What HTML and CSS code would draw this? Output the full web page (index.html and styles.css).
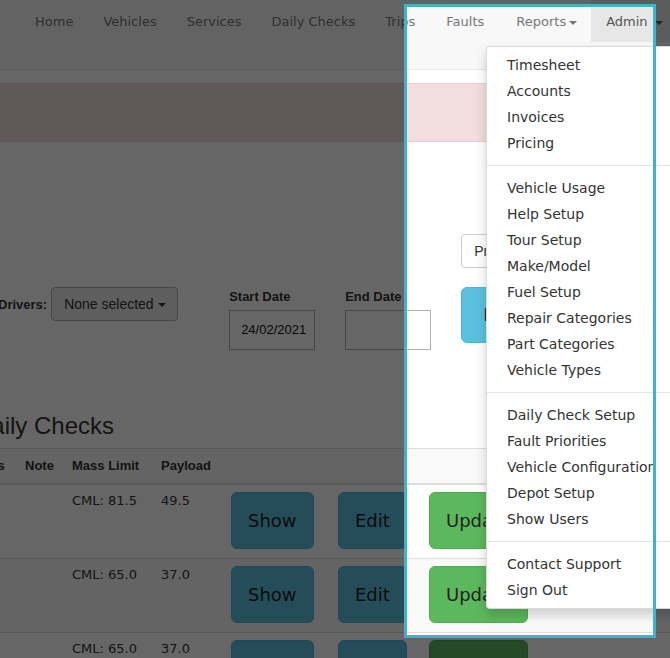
FILE: index.html
```html
<!DOCTYPE html>
<html>
<head>
<meta charset="utf-8">
<title>Daily Checks</title>
<link rel="stylesheet" href="styles.css">
</head>
<body>
<div class="page">
  <nav class="navbar">
    <ul class="nav">
      <li><a>Home</a></li>
      <li><a>Vehicles</a></li>
      <li><a>Services</a></li>
      <li><a>Daily Checks</a></li>
      <li><a>Trips</a></li>
      <li class="wide"><a>Faults</a></li>
      <li class="wide reports"><a>Reports<span class="caret"></span></a></li>
      <li class="active"><a>Admin <span class="caret"></span></a></li>
    </ul>
  </nav>

  <div class="alert"></div>

  <div class="filters">
    <div class="drv">
      <label class="lbl">Drivers:</label>
      <div class="btn-dd">None selected <span class="caret tight"></span></div>
    </div>
    <div class="date start">
      <label class="lbl">Start Date</label>
      <div class="input">24/02/2021</div>
    </div>
    <div class="date end">
      <label class="lbl">End Date</label>
      <div class="input"></div>
    </div>
    <div class="side">
      <div class="select">Preset ranges</div>
      <div class="big-btn">Filter</div>
    </div>
  </div>

  <h2 class="title">Daily Checks</h2>

  <table class="table">
    <colgroup>
      <col class="c-status">
      <col class="c-note">
      <col class="c-mass">
      <col class="c-pay">
      <col class="c-show">
      <col class="c-edit">
      <col class="c-upd">
    </colgroup>
    <thead>
      <tr>
        <th>Status</th>
        <th>Note</th>
        <th>Mass Limit</th>
        <th>Payload</th>
        <th></th>
        <th></th>
        <th></th>
      </tr>
    </thead>
    <tbody>
      <tr>
        <td></td><td></td><td>CML: 81.5</td><td>49.5</td>
        <td><span class="btn info">Show</span></td>
        <td><span class="btn info">Edit</span></td>
        <td><span class="btn success">Update</span></td>
      </tr>
      <tr>
        <td></td><td></td><td>CML: 65.0</td><td>37.0</td>
        <td><span class="btn info">Show</span></td>
        <td><span class="btn info">Edit</span></td>
        <td><span class="btn success">Update</span></td>
      </tr>
      <tr>
        <td></td><td></td><td>CML: 65.0</td><td>37.0</td>
        <td><span class="btn info">Show</span></td>
        <td><span class="btn info">Edit</span></td>
        <td><span class="btn success">Update</span></td>
      </tr>
    </tbody>
  </table>
</div>

<div class="tour-shade"></div>

<ul class="dropdown">
  <li><a>Timesheet</a></li>
  <li><a>Accounts</a></li>
  <li><a>Invoices</a></li>
  <li><a>Pricing</a></li>
  <li class="divider"></li>
  <li><a>Vehicle Usage</a></li>
  <li><a>Help Setup</a></li>
  <li><a>Tour Setup</a></li>
  <li><a>Make/Model</a></li>
  <li><a>Fuel Setup</a></li>
  <li><a>Repair Categories</a></li>
  <li><a>Part Categories</a></li>
  <li><a>Vehicle Types</a></li>
  <li class="divider"></li>
  <li><a>Daily Check Setup</a></li>
  <li><a>Fault Priorities</a></li>
  <li><a>Vehicle Configuration</a></li>
  <li><a>Depot Setup</a></li>
  <li><a>Show Users</a></li>
  <li class="divider"></li>
  <li><a>Contact Support</a></li>
  <li><a>Sign Out</a></li>
</ul>

<div class="tour-frame"></div>
</body>
</html>
```

FILE: styles.css
```css
html, body {
  margin: 0;
  padding: 0;
  width: 670px;
  height: 658px;
  overflow: hidden;
  background: #fff;
}

body {
  position: relative;
  font-family: "Liberation Sans", Arial, sans-serif;
  color: #333;
  font-size: 14px;
}

.page {
  width: 670px;
}

/* navbar */
.navbar {
  height: 69px;
  background: #f8f8f8;
  border-bottom: 1px solid #e7e7e7;
}

.nav {
  list-style: none;
  margin: 0;
  padding: 0 0 0 20px;
  display: flex;
  white-space: nowrap;
}

.nav a {
  display: block;
  padding: 12px 15px 10px;
  line-height: 20px;
  font-family: "DejaVu Sans", Verdana, sans-serif;
  font-size: 13px;
  color: #777;
}

.nav .wide a {
  padding-left: 16px;
  padding-right: 16px;
}

.nav .reports a {
  padding-right: 14px;
}

.nav .active a {
  background: #e7e7e7;
  color: #555;
}

.caret {
  display: inline-block;
  width: 0;
  height: 0;
  margin-left: 3px;
  vertical-align: middle;
  border-top: 4px solid;
  border-left: 4px solid transparent;
  border-right: 4px solid transparent;
}

.caret.tight {
  margin-left: 0;
}

/* alert */
.alert {
  margin: 13px -20px 0;
  height: 57px;
  background: #f2dede;
  border: 1px solid #ebccd1;
}

/* filters */
.filters {
  display: flex;
  align-items: flex-start;
}

.lbl {
  font-weight: bold;
  font-size: 13px;
  line-height: 15px;
  color: #333;
}

.drv {
  display: flex;
  align-items: center;
  gap: 4px;
  margin-left: -2px;
  margin-top: 145px;
}

.btn-dd {
  box-sizing: border-box;
  width: 127px;
  height: 34px;
  padding: 6px 12px;
  line-height: 20px;
  font-size: 14px;
  color: #333;
  background: #ebebeb;
  border: 1px solid #b3b3b3;
  border-radius: 4px;
  white-space: nowrap;
  overflow: hidden;
}

.date {
  display: flex;
  flex-direction: column;
  margin-top: 147px;
}

.date .lbl {
  margin-bottom: 6px;
}

.date.start {
  margin-left: 51px;
}

.date.end {
  margin-left: 30px;
}

.input {
  box-sizing: border-box;
  width: 86px;
  height: 40px;
  padding: 0 11px;
  border: 1px solid #b0b0b0;
  font-size: 13px;
  line-height: 38px;
  color: #111;
  white-space: nowrap;
}

.side {
  display: flex;
  flex-direction: column;
  gap: 19px;
  margin-left: 30px;
  margin-top: 92px;
}

.select {
  box-sizing: border-box;
  width: 160px;
  height: 34px;
  padding: 6px 12px;
  line-height: 20px;
  font-size: 14px;
  color: #333;
  border: 1px solid #ccc;
  border-radius: 4px;
  white-space: nowrap;
}

.big-btn {
  box-sizing: border-box;
  width: 140px;
  height: 56px;
  padding: 0 21px;
  line-height: 54px;
  font-family: "DejaVu Sans", Verdana, sans-serif;
  font-size: 18px;
  color: #222;
  background: #5bc0de;
  border: 1px solid #46b8da;
  border-radius: 6px;
}

/* heading */
.title {
  margin: 63px 0 9px -26px;
  font-size: 24px;
  line-height: 26px;
  font-weight: normal;
  color: #333;
}

/* table */
.table {
  margin-left: -43px;
  width: 800px;
  table-layout: fixed;
  border-collapse: collapse;
  border-top: 1px solid #ddd;
}

.c-status { width: 60px; }
.c-note { width: 47px; }
.c-mass { width: 89px; }
.c-pay { width: 70px; }
.c-show { width: 107px; }
.c-edit { width: 91px; }
.c-upd { width: 336px; }

.table th {
  padding: 8px;
  text-align: left;
  font-weight: bold;
  font-size: 13px;
  line-height: 18px;
  color: #333;
  background: #f9f9f9;
  border-bottom: 2px solid #ddd;
  white-space: nowrap;
}

.table td {
  padding: 7px 8px 9px;
  vertical-align: top;
  font-family: "DejaVu Sans", Verdana, sans-serif;
  font-size: 13px;
  line-height: 18px;
  color: #333;
  border-top: 1px solid #ddd;
  white-space: nowrap;
}

.table tbody tr:nth-child(even) td {
  background: #f9f9f9;
}

.btn {
  display: inline-block;
  vertical-align: top;
  box-sizing: border-box;
  height: 57px;
  padding: 0 16px;
  line-height: 55px;
  font-family: "DejaVu Sans", Verdana, sans-serif;
  font-size: 18px;
  color: #222;
  border: 1px solid transparent;
  border-radius: 6px;
}

.btn.info {
  background: #5bc0de;
  border-color: #46b8da;
}

.btn.success {
  background: #5cb85c;
  border-color: #4cae4c;
}

/* tour overlay */
.tour-shade {
  position: absolute;
  left: 404px;
  top: 4px;
  width: 252px;
  height: 634px;
  box-sizing: border-box;
  box-shadow: 0 0 0 2000px rgba(0, 0, 0, 0.6);
  z-index: 10;
}

.tour-frame {
  position: absolute;
  left: 404px;
  top: 4px;
  width: 252px;
  height: 634px;
  box-sizing: border-box;
  border: 3px solid #3db4c7;
  z-index: 30;
  pointer-events: none;
}

/* dropdown */
.dropdown {
  position: absolute;
  left: 486px;
  top: 46px;
  width: 210px;
  margin: 0;
  padding: 5px 0;
  list-style: none;
  background: #fff;
  border: 1px solid rgba(0, 0, 0, 0.15);
  border-radius: 4px;
  box-shadow: 0 6px 12px rgba(0, 0, 0, 0.175);
  z-index: 20;
}

.dropdown a {
  display: block;
  padding: 3px 20px;
  line-height: 20px;
  font-family: "DejaVu Sans", Verdana, sans-serif;
  font-size: 14px;
  color: #333;
  white-space: nowrap;
}

.dropdown .divider {
  height: 1px;
  margin: 9px 0;
  background: #e5e5e5;
}
```
